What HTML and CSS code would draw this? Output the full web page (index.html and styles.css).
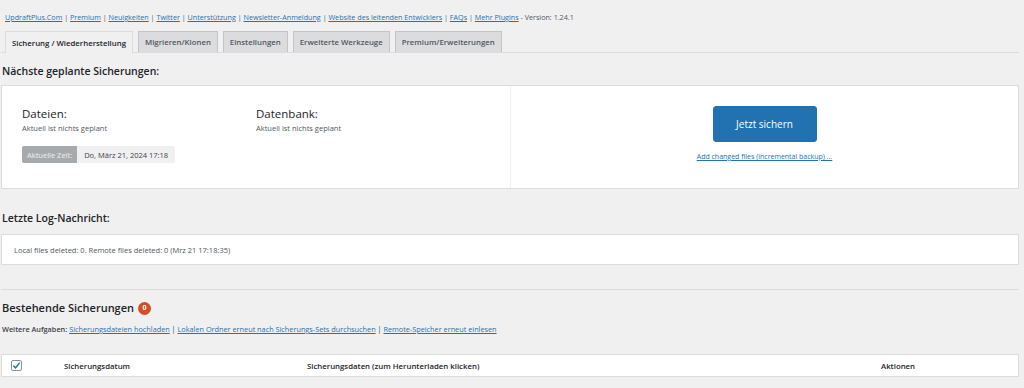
FILE: index.html
```html
<!DOCTYPE html>
<html lang="de">
<head>
    <meta charset="UTF-8">
    <meta name="viewport" content="width=device-width, initial-scale=1.0">
    <title>UpdraftPlus Sicherung</title>
    <link rel="stylesheet" href="styles.css">
</head>
<body>
    <div class="wrap">
        <div class="links">
            <a href="#">UpdraftPlus.Com</a> | <a href="#">Premium</a> | <a href="#">Neuigkeiten</a> | <a href="#">Twitter</a> | <a href="#">Unterstützung</a> | <a href="#">Newsletter-Anmeldung</a> | <a href="#">Website des leitenden Entwicklers</a> | <a href="#">FAQs</a> | <a href="#">Mehr Plugins</a> - Version: 1.24.1
        </div>

        <div class="tabs">
            <span class="tab active">Sicherung / Wiederherstellung</span>
            <span class="tab">Migrieren/Klonen</span>
            <span class="tab">Einstellungen</span>
            <span class="tab">Erweiterte Werkzeuge</span>
            <span class="tab">Premium/Erweiterungen</span>
        </div>

        <h3 class="section-title first">Nächste geplante Sicherungen:</h3>
        <div class="box schedule">
            <div class="schedule-left">
                <div class="cols">
                    <div class="col">
                        <div class="col-title">Dateien:</div>
                        <div class="col-text">Aktuell ist nichts geplant</div>
                    </div>
                    <div class="col">
                        <div class="col-title">Datenbank:</div>
                        <div class="col-text">Aktuell ist nichts geplant</div>
                    </div>
                </div>
                <div class="time">
                    <span class="time-label">Aktuelle Zeit:</span>
                    <span class="time-value">Do, März 21, 2024 17:18</span>
                </div>
            </div>
            <div class="schedule-right">
                <button class="btn-primary">Jetzt sichern</button>
                <a href="#" class="small-link">Add changed files (incremental backup) ...</a>
            </div>
        </div>

        <h3 class="section-title">Letzte Log-Nachricht:</h3>
        <div class="box log">Local files deleted: 0. Remote files deleted: 0 (Mrz 21 17:18:35)</div>

        <hr class="sep">

        <h3 class="section-title existing">Bestehende Sicherungen <span class="count">0</span></h3>
        <div class="tasks">
            <strong>Weitere Aufgaben:</strong> <a href="#">Sicherungsdateien hochladen</a> | <a href="#">Lokalen Ordner erneut nach Sicherungs-Sets durchsuchen</a> | <a href="#">Remote-Speicher erneut einlesen</a>
        </div>

        <div class="box table-head">
            <span class="cell check"><span class="checkbox">
                <svg width="9" height="9" viewBox="0 0 10 10"><path d="M1.5 5.2 L4 7.6 L8.6 1.8" fill="none" stroke="#2271b1" stroke-width="1.6"/></svg>
            </span></span>
            <span class="cell date">Sicherungsdatum</span>
            <span class="cell data">Sicherungsdaten (zum Herunterladen klicken)</span>
            <span class="cell actions">Aktionen</span>
        </div>
    </div>
</body>
</html>
```

FILE: styles.css
```css
body {
    margin: 0;
    background-color: #f0f0f1;
    font-family: "Open Sans", "Noto Sans", sans-serif;
    color: #3c434a;
}
a {
    color: #2271b1;
}
.wrap {
    width: 1018px;
    padding: 11px 0 0 1px;
}
.links {
    padding-left: 4px;
    font-size: 7.2px;
    line-height: 12px;
    height: 12px;
    color: #50575e;
}
.tabs {
    display: flex;
    gap: 5px;
    margin-top: 8px;
    padding-left: 4px;
    height: 21px;
    border-bottom: 1px solid #dcdcde;
}
.tab {
    display: flex;
    align-items: center;
    padding: 0 6px;
    font-size: 7.8px;
    font-weight: 600;
    color: #50575e;
    background: #dcdcde;
    border: 1px solid #c3c4c7;
    border-bottom: none;
    box-sizing: border-box;
    height: 21px;
}
.tab.active {
    background: #f0f0f1;
    color: #1d2327;
    border-color: #dcdcde;
    height: 22px;
    margin-bottom: -1px;
}
.section-title {
    margin: 0;
    padding-left: 1px;
    font-size: 10.5px;
    font-weight: 600;
    color: #1d2327;
    line-height: 16px;
}
.section-title.first {
    margin-top: 10px;
    margin-bottom: 6px;
}
.box {
    background: #fff;
    border: 1px solid #dcdcde;
}
.schedule {
    display: flex;
    height: 104px;
    box-sizing: border-box;
}
.schedule-left {
    width: 509px;
    padding: 20px 0 0 20px;
    border-right: 1px solid #f0f0f1;
    box-sizing: border-box;
}
.cols {
    display: flex;
}
.col {
    width: 234px;
}
.col-title {
    font-size: 11.5px;
    line-height: 16px;
    color: #1d2327;
}
.col-text {
    font-size: 7.5px;
    line-height: 12px;
    color: #50575e;
}
.time {
    display: inline-flex;
    margin-top: 12px;
    font-size: 7.5px;
    height: 17px;
    border-radius: 2px;
    overflow: hidden;
}
.time-label {
    display: flex;
    align-items: center;
    padding: 0 5px;
    background: #a7aaad;
    color: #f0f0f1;
}
.time-value {
    display: flex;
    align-items: center;
    padding: 0 7px;
    background: #f0f0f1;
    color: #3c434a;
}
.schedule-right {
    flex: 1;
    display: flex;
    flex-direction: column;
    align-items: center;
    padding-top: 20px;
}
.btn-primary {
    width: 104px;
    height: 36px;
    background: #2271b1;
    border: 1px solid #2271b1;
    border-radius: 3px;
    color: #fff;
    font-family: inherit;
    font-size: 10px;
}
.small-link {
    margin-top: 10px;
    font-size: 7px;
    line-height: 10px;
}
.box.log {
    margin-top: 8px;
    height: 31px;
    box-sizing: border-box;
    padding-left: 12px;
    display: flex;
    align-items: center;
    font-size: 7.5px;
    color: #50575e;
}
.schedule + .section-title {
    margin-top: 21px;
}
.sep {
    margin: 24px 0 0 0;
    border: none;
    border-top: 1px solid #dcdcde;
}
.section-title.existing {
    margin-top: 10px;
    display: flex;
    align-items: center;
    gap: 4px;
    font-size: 11px;
}
.count {
    display: inline-flex;
    align-items: center;
    justify-content: center;
    width: 13px;
    height: 13px;
    border-radius: 50%;
    background: #d54e21;
    color: #fff;
    font-size: 7px;
    font-weight: 700;
}
.tasks {
    margin-top: 8px;
    padding-left: 1px;
    font-size: 7.3px;
    line-height: 11px;
    color: #3c434a;
}
.tasks strong {
    font-weight: 600;
}
.table-head {
    margin-top: 19px;
    height: 23px;
    box-sizing: border-box;
    display: flex;
    align-items: center;
    font-size: 7.8px;
    font-weight: 600;
    color: #1d2327;
}
.cell.check {
    width: 62px;
    padding-left: 9px;
    box-sizing: border-box;
    display: flex;
}
.checkbox {
    width: 9px;
    height: 9px;
    border: 1px solid #8c8f94;
    border-radius: 2px;
    display: flex;
    align-items: center;
    justify-content: center;
    background: #fff;
}
.cell.date {
    width: 243px;
}
.cell.data {
    width: 574px;
}
```
